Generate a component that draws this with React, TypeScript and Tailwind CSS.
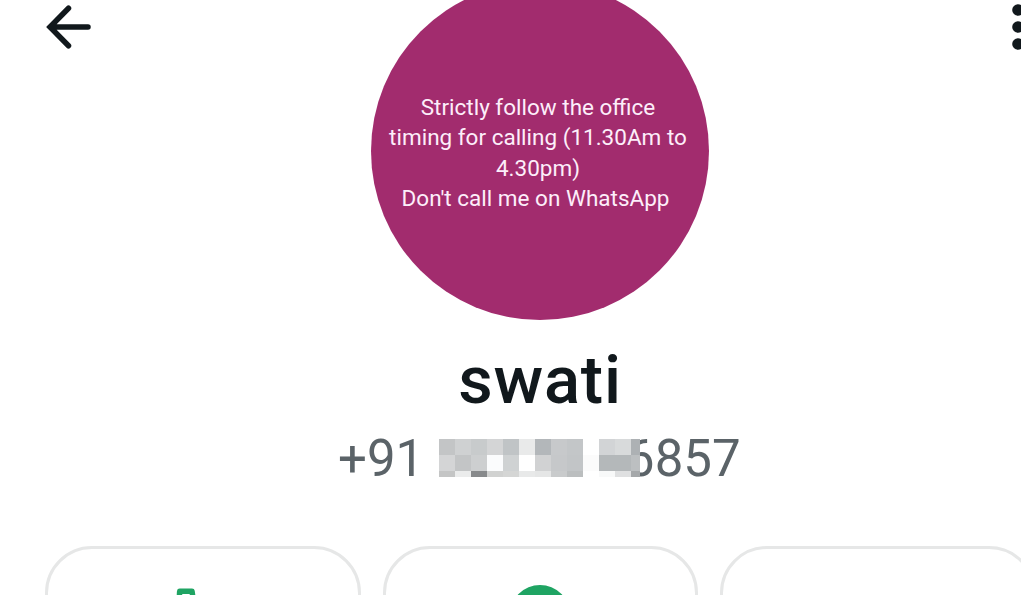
import type { ReactNode } from "react";

const MASK_ROWS: string[][] = [
  ["#c3c5c6", "#cfd1d2", "#c8cbcc", "#d4d5d6", "#c0c4c6", "#e9eaea", "#b3b7ba", "#c7c9cb", "#c3c6c8", "#ffffff", "#d2d4d6", "#d8dadb", "#adb1b4"],
  ["#d4d5d6", "#c3c5c6", "#cdcfd0", "#fbfcfd", "#cfd2d3", "#ffffff", "#d1d2d3", "#c6c8ca", "#c2c5c7", "#fbfbfb", "#b4b8ba", "#b4b8ba", "#bcbfc1"],
  ["#c4c5c5", "#ebecec", "#888a8c", "#d1d2d1", "#d5d6d5", "#e8e9e9", "#e5e6e6", "#c9cbcc", "#bbbebf", "#ffffff", "#f8f9f9", "#dfe0e1", "#a5a8aa"],
];

const STATUS_LINES = [
  "Strictly follow the office",
  "timing for calling (11.30Am to",
  "4.30pm)",
  "Don't call me on WhatsApp",
];

function BackIcon() {
  return (
    <svg width="46" height="46" viewBox="0 0 46 46" fill="none" stroke="#11181c" strokeWidth="5.500" strokeLinecap="round" strokeLinejoin="miter">
      <path d="M43 23H5M23.500 4.200L5 23L23.500 41.800" />
    </svg>
  );
}

function MoreIcon() {
  return (
    <svg width="12" height="46" viewBox="0 0 12 46" fill="#11181c">
      <circle cx="6" cy="6" r="5.800" />
      <circle cx="6" cy="23" r="5.800" />
      <circle cx="6" cy="40" r="5.800" />
    </svg>
  );
}

function CallIcon() {
  return (
    <svg className="ml-[126px] mt-[39px]" width="56" height="56" viewBox="0 0 56 56" fill="none" stroke="#1fa463" strokeWidth="5.500" strokeLinejoin="round">
      <path d="M5.700 3.200H18L20 17L12.500 23C16 32 23 40 32 44.500L38 37L52.500 40V50C28 53 3 28 5.700 3.200Z" />
    </svg>
  );
}

function MaskedDigits() {
  return (
    <span className="relative z-10 mt-px grid h-[38px] w-[201px] shrink-0 grid-cols-[repeat(12,16px)_9px] grid-rows-[16px_16px_6px]">
      {MASK_ROWS.flatMap((row, r) =>
        row.map((color, c) => <span key={`${r}-${c}`} style={{ backgroundColor: color }} />),
      )}
    </span>
  );
}

function ActionCard({ children }: { children?: ReactNode }) {
  return (
    <button className="flex h-[180px] w-[315.500px] shrink-0 items-start rounded-[47px] border-[3px] border-[#e6e7e7] bg-white">
      {children}
    </button>
  );
}

export default function App() {
  return (
    <main className="h-[595px] w-[1021px] overflow-hidden bg-white font-['Roboto',sans-serif]">
      <header className="flex h-[320px] w-[1080px] items-start justify-between pl-[45px] pr-[56px]">
        <button aria-label="Back" className="mt-1 w-[46px]">
          <BackIcon />
        </button>
        <div className="-mt-[18px] ml-[-23px] flex h-[338px] w-[338px] shrink-0 flex-col items-center rounded-full bg-[#a22c6e] pt-[109.500px] text-[22.500px] leading-[30.600px] text-[#fdeefa]">
          {STATUS_LINES.map((line) => (
            <p key={line} className="-ml-1 whitespace-nowrap last:-ml-[9px]">{line}</p>
          ))}
        </div>
        <button aria-label="More options" className="mt-1 w-3">
          <MoreIcon />
        </button>
      </header>

      <section className="flex w-[1080px] flex-col items-center">
        <h1 className="mt-[20px] h-20 text-[67px] font-medium leading-[80px] tracking-[0.8px] text-[#11181c]">swati</h1>
        <div className="mt-[18px] flex h-10 w-[404px] items-start text-[51px] leading-[42px] text-[#5b6368]">
          <span className="w-[101px] shrink-0 whitespace-nowrap">+91</span>
          <MaskedDigits />
          <span className="-ml-[14px]">6857</span>
        </div>
      </section>

      <section className="mt-[68px] flex w-[1080px] gap-[22px] pl-[45px]">
        <ActionCard>
          <CallIcon />
        </ActionCard>
        <ActionCard>
          <span className="ml-[124.500px] mt-[36px] h-[60px] w-[60px] rounded-full bg-[#1fa463]" />
        </ActionCard>
        <ActionCard />
      </section>
    </main>
  );
}
